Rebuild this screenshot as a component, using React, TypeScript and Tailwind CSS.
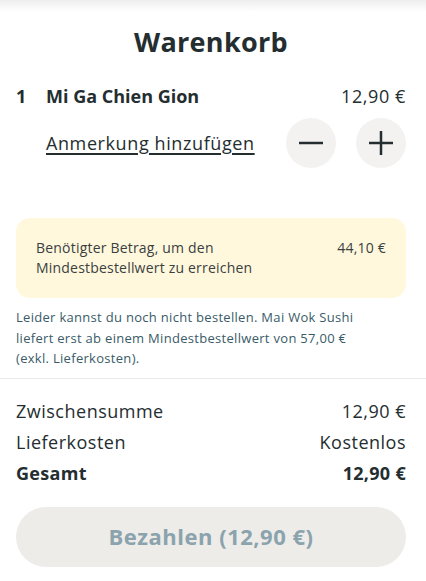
export default function App() {
  const font = { fontFamily: "'Open Sans', 'Noto Sans', sans-serif" };
  return (
    <div className="w-[426px] h-[581px] bg-white text-[#242e30] overflow-hidden" style={font}>
      <div className="h-[12px] bg-gradient-to-b from-[#eeeeee] to-white" />
      <div className="pl-4 pr-5">
        <h1 className="mt-[12px] text-center text-[27px] leading-[36px] font-bold tracking-[0.3px]">Warenkorb</h1>

        {/* Item */}
        <div className="mt-6 flex items-center text-[18px] leading-6">
          <span className="w-[30px] font-bold">1</span>
          <span className="font-bold">Mi Ga Chien Gion</span>
          <span className="ml-auto tracking-[0.6px]">12,90 €</span>
        </div>
        <div className="mt-[10px] flex items-center">
          <span className="ml-[30px] text-[18px] tracking-[0.6px] underline decoration-2 underline-offset-[3px]">
            Anmerkung hinzufügen
          </span>
          <div className="ml-auto flex gap-5">
            <button className="w-[50px] h-[50px] rounded-full bg-[#f3f2f0] flex items-center justify-center">
              <svg width="24" height="24" viewBox="0 0 24 24">
                <path d="M0 12h24" stroke="#242e30" strokeWidth="2.5" />
              </svg>
            </button>
            <button className="w-[50px] h-[50px] rounded-full bg-[#f3f2f0] flex items-center justify-center">
              <svg width="24" height="24" viewBox="0 0 24 24">
                <path d="M0 12h24M12 0v24" stroke="#242e30" strokeWidth="2.5" />
              </svg>
            </button>
          </div>
        </div>

        {/* Minimum order */}
        <div className="mt-[50px] rounded-[14px] bg-[#fff8dd] px-5 py-5 flex text-[14px] leading-5 tracking-[0.2px] text-[#3a3f40]">
          <span className="w-[250px]">Benötigter Betrag, um den Mindestbestellwert zu erreichen</span>
          <span className="ml-auto">44,10 €</span>
        </div>
        <p className="mt-[9px] w-[360px] text-[13px] leading-[20.5px] tracking-[0.3px] text-[#3a5b68]">
          Leider kannst du noch nicht bestellen. Mai Wok Sushi liefert erst ab einem Mindestbestellwert von 57,00 € (exkl. Lieferkosten).
        </p>
      </div>

      <div className="mt-[9px] border-t border-[#ebebeb]" />

      <div className="pl-4 pr-5">
        <div className="mt-[17px] text-[18px] leading-[31px]">
          <div className="flex justify-between tracking-[0.5px]">
            <span>Zwischensumme</span>
            <span>12,90 €</span>
          </div>
          <div className="flex justify-between tracking-[0.5px]">
            <span>Lieferkosten</span>
            <span>Kostenlos</span>
          </div>
          <div className="flex justify-between font-bold tracking-[0.3px]">
            <span>Gesamt</span>
            <span>12,90 €</span>
          </div>
        </div>
        <button className="mt-[18px] w-full h-[60px] rounded-full bg-[#eeece9] text-[22px] font-bold tracking-[0.5px] text-[#8ba3ad]">
          Bezahlen (12,90 €)
        </button>
      </div>
    </div>
  );
}
